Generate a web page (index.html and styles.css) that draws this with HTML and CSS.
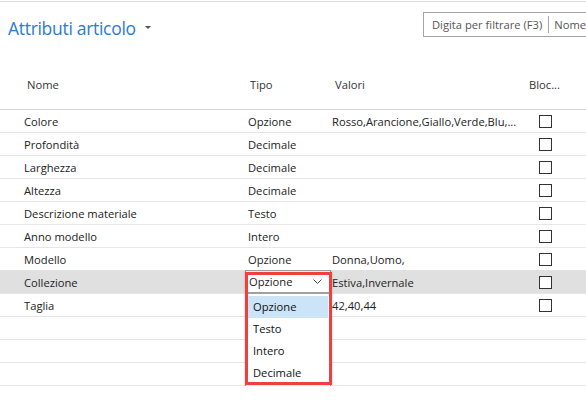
FILE: index.html
```html
<!DOCTYPE html>
<html lang="it">
<head>
<meta charset="utf-8">
<title>Attributi articolo</title>
<link rel="stylesheet" href="styles.css">
</head>
<body>
<div class="app">
  <div class="titlebar">
    <div class="title">Attributi articolo <span class="caret"></span></div>
    <div class="filter">
      <span class="filter-text">Digita per filtrare (F3)</span>
      <span class="filter-sep"></span>
      <span class="filter-field">Nome</span>
    </div>
  </div>

  <div class="hrow">
    <div class="hc hc-name">Nome</div>
    <div class="hc hc-type">Tipo</div>
    <div class="hc hc-val">Valori</div>
    <div class="hc hc-blk">Bloc...</div>
  </div>

  <div class="row"><div class="c c-name">Colore</div><div class="c c-type">Opzione</div><div class="c c-val">Rosso,Arancione,Giallo,Verde,Blu,...</div><div class="c c-blk"><span class="cb"></span></div></div>
  <div class="row"><div class="c c-name">Profondità</div><div class="c c-type">Decimale</div><div class="c c-val"></div><div class="c c-blk"><span class="cb"></span></div></div>
  <div class="row"><div class="c c-name">Larghezza</div><div class="c c-type">Decimale</div><div class="c c-val"></div><div class="c c-blk"><span class="cb"></span></div></div>
  <div class="row"><div class="c c-name">Altezza</div><div class="c c-type">Decimale</div><div class="c c-val"></div><div class="c c-blk"><span class="cb"></span></div></div>
  <div class="row"><div class="c c-name">Descrizione materiale</div><div class="c c-type">Testo</div><div class="c c-val"></div><div class="c c-blk"><span class="cb"></span></div></div>
  <div class="row"><div class="c c-name">Anno modello</div><div class="c c-type">Intero</div><div class="c c-val"></div><div class="c c-blk"><span class="cb"></span></div></div>
  <div class="row"><div class="c c-name">Modello</div><div class="c c-type">Opzione</div><div class="c c-val">Donna,Uomo,</div><div class="c c-blk"><span class="cb"></span></div></div>
  <div class="row row-sel">
    <div class="c c-name">Collezione</div>
    <div class="c c-type c-edit">
      <div class="select">
        <span class="select-text">Opzione</span>
        <svg class="chev" width="9" height="5" viewBox="0 0 9 5"><polyline points="0.5,0.5 4.5,4.5 8.5,0.5" fill="none" stroke="#444" stroke-width="1"/></svg>
      </div>
      <div class="list">
        <div class="opt opt-on">Opzione</div>
        <div class="opt">Testo</div>
        <div class="opt">Intero</div>
        <div class="opt">Decimale</div>
        <svg class="grip" width="9" height="9" viewBox="0 0 9 9"><rect x="6" y="0" width="2" height="2" fill="#aaa"/><rect x="3" y="3" width="2" height="2" fill="#aaa"/><rect x="6" y="3" width="2" height="2" fill="#aaa"/><rect x="0" y="6" width="2" height="2" fill="#aaa"/><rect x="3" y="6" width="2" height="2" fill="#aaa"/><rect x="6" y="6" width="2" height="2" fill="#aaa"/></svg>
      </div>
      <div class="mark"></div>
    </div>
    <div class="c c-val">Estiva,Invernale</div>
    <div class="c c-blk"><span class="cb"></span></div>
  </div>
  <div class="row"><div class="c c-name">Taglia</div><div class="c c-type"></div><div class="c c-val">42,40,44</div><div class="c c-blk"><span class="cb"></span></div></div>
  <div class="row"><div class="c c-name"></div><div class="c c-type"></div><div class="c c-val"></div><div class="c c-blk"></div></div>
  <div class="row"><div class="c c-name"></div><div class="c c-type"></div><div class="c c-val"></div><div class="c c-blk"></div></div>
  <div class="row"><div class="c c-name"></div><div class="c c-type"></div><div class="c c-val"></div><div class="c c-blk"></div></div>
</div>
</body>
</html>
```

FILE: styles.css
```css
html, body {
  margin: 0;
  padding: 0;
  background: #ffffff;
  overflow: hidden;
}

body {
  font-family: "Open Sans", "Noto Sans", sans-serif;
  font-size: 11.2px;
  color: #222222;
}

.app {
  padding-top: 1px;
}

.titlebar {
  border-top: 1px solid #dcdcdc;
  height: 58px;
  display: grid;
  grid-template-columns: 423px 300px;
}

.title {
  padding-left: 8px;
  padding-top: 13px;
  font-size: 17.5px;
  letter-spacing: -0.3px;
  line-height: 26px;
  color: #2b7bd0;
  white-space: nowrap;
}

.caret {
  display: inline-block;
  width: 0;
  height: 0;
  border-left: 3px solid transparent;
  border-right: 3px solid transparent;
  border-top: 3px solid #555;
  vertical-align: middle;
  margin-left: 5px;
  position: relative;
  top: -3px;
}

.filter {
  margin-top: 10px;
  height: 23px;
  border: 1px solid #a6a6a6;
  display: flex;
  align-items: center;
  color: #555;
  white-space: nowrap;
}

.filter-text {
  padding-left: 8px;
}

.filter-sep {
  width: 1px;
  height: 17px;
  background: #a6a6a6;
  margin: 0 5px 0 6px;
}

.hrow,
.row {
  display: grid;
  grid-template-columns: 244px 84px 200px 58px;
  align-items: center;
  box-sizing: border-box;
}

.hrow {
  height: 50px;
  border-bottom: 1px solid #d4d4d4;
  color: #333;
}

.hc-name { padding-left: 27px; }
.hc-type { padding-left: 6px; }
.hc-val  { padding-left: 7px; }
.hc-blk  { padding-left: 1px; }

.row {
  height: 23px;
  border-bottom: 1px solid #e6e6e6;
}

.c {
  white-space: nowrap;
  overflow: visible;
}

.c-name { padding-left: 24px; }
.c-type { padding-left: 4px; }
.c-val  { padding-left: 4px; }
.c-blk  { padding-left: 11px; display: flex; align-items: center; }

.cb {
  display: block;
  width: 11px;
  height: 11px;
  border: 1px solid #333;
  background: #fff;
}

.row-sel {
  background: #e0e0e0;
  box-shadow: 0 -1px 0 #e0e0e0;
}

.c-edit {
  position: relative;
  align-self: stretch;
}

.select {
  position: absolute;
  left: 1px;
  top: -1px;
  width: 86px;
  height: 23px;
  box-sizing: border-box;
  border: 1px solid #a0a0a0;
  background: #fff;
  display: flex;
  align-items: center;
  padding-left: 3px;
  z-index: 2;
}

.select-text {
  flex: 1;
}

.chev {
  margin-right: 8px;
}

.list {
  position: absolute;
  left: 1px;
  top: 22px;
  width: 86px;
  height: 111px;
  box-sizing: border-box;
  border: 1px solid #a0a0a0;
  background: #fff;
  padding: 2px 2px 0 2px;
  z-index: 2;
}

.opt {
  height: 22px;
  line-height: 22px;
  padding-left: 5px;
  color: #111;
}

.opt-on {
  background: #cce4f7;
}

.grip {
  position: absolute;
  right: 1px;
  bottom: 1px;
}

.mark {
  position: absolute;
  left: 1px;
  top: 1px;
  width: 87px;
  height: 113px;
  box-sizing: border-box;
  border: 3px solid #ef4040;
  z-index: 3;
  box-shadow: 0 0 2px rgba(0,0,0,0.25);
}
```
